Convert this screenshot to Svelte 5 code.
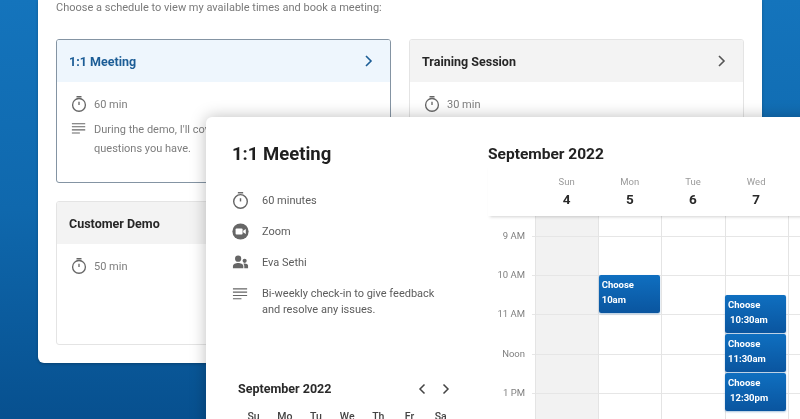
<script lang="ts">
	const schedules = [
		{ name: '1:1 Meeting', mins: 60, active: true, desc: ["During the demo, I'll cover any", 'questions you have.'] },
		{ name: 'Training Session', mins: 30, active: false, desc: [] },
		{ name: 'Customer Demo', mins: 50, active: false, desc: [] }
	];

	const hours = ['9 AM', '10 AM', '11 AM', 'Noon', '1 PM', '2 PM'];

	const days = [
		{ label: 'Sun', num: 4, off: true, slots: [] },
		{ label: 'Mon', num: 5, slots: [{ top: 59, time: '10am', indent: 0 }] },
		{ label: 'Tue', num: 6, slots: [] },
		{
			label: 'Wed',
			num: 7,
			slots: [
				{ top: 79, time: '10:30am', indent: 2 },
				{ top: 118, time: '11:30am', indent: 0 },
				{ top: 157, time: '12:30pm', indent: 2 }
			]
		},
		{ label: 'Thu', num: 8, slots: [] }
	];

	const weekdays = ['Su', 'Mo', 'Tu', 'We', 'Th', 'Fr', 'Sa'];
</script>

{#snippet timer()}
	<svg class="icon" viewBox="0 0 18 18" fill="none" stroke="#666" stroke-width="1.5">
		<path d="M6.2 .8h5.6" />
		<circle cx="9" cy="10" r="7.2" />
		<path d="M9 6.600v3.400" />
	</svg>
{/snippet}

{#snippet notes()}
	<svg class="icon" viewBox="0 0 18 18" fill="none" stroke="#666" stroke-width="1.2">
		<path d="M1 3h15M1 6.500h15M1 10h15M1 13.500h9" />
	</svg>
{/snippet}

<div class="page">
	<section class="panel">
		<p class="intro">Choose a schedule to view my available times and book a meeting:</p>
		<div class="cards">
			{#each schedules as s}
				<div class="card" class:active={s.active}>
					<div class="card-head">
						<span class="card-name">{s.name}</span>
						<svg class="chevron" viewBox="0 0 10 14" fill="none" stroke="currentColor" stroke-width="1.6">
							<path d="M2 2l5 5-5 5" />
						</svg>
					</div>
					<div class="card-body">
						<div class="card-row">
							{@render timer()}
							<span>{s.mins} min</span>
						</div>
						{#if s.desc.length}
							<div class="card-row desc">
								{@render notes()}
								<span>{s.desc[0]}<br />{s.desc[1]}</span>
							</div>
						{/if}
					</div>
				</div>
			{/each}
		</div>
	</section>

	<section class="booking">
		<div class="details">
			<h2>1:1 Meeting</h2>
			<ul class="facts">
				<li>{@render timer()}<span>60 minutes</span></li>
				<li>
					<svg class="icon" viewBox="0 0 18 18">
						<circle cx="9" cy="9" r="8.600" fill="#666" />
						<rect x="3.800" y="5.800" width="7.400" height="6.400" rx="1" fill="#fff" />
						<path d="M11.800 8.300l2.800-2v5.400l-2.800-2z" fill="#fff" />
					</svg>
					<span>Zoom</span>
				</li>
				<li>
					<svg class="icon" viewBox="0 0 18 18" fill="#666">
						<circle cx="6.500" cy="5" r="3.300" />
						<path d="M1 15v-2.200C1 10.400 4 9.400 6.500 9.400s5.500 1 5.500 3.400V15z" />
						<circle cx="13.400" cy="7.200" r="2.200" />
						<path d="M13 15v-2.400c0-1-.4-1.700-1-2.300.5-.2 1.100-.3 1.600-.3 1.500 0 3.400.7 3.400 2.300V15z" />
					</svg>
					<span>Eva Sethi</span>
				</li>
				<li class="top">
					{@render notes()}
					<span>Bi-weekly check-in to give feedback<br />and resolve any issues.</span>
				</li>
			</ul>
			<div class="mini">
				<div class="mini-head">
					<span class="mini-title">September 2022</span>
					<svg class="mini-arrow" viewBox="0 0 10 14" fill="none" stroke="#444" stroke-width="1.5">
						<path d="M7.500 2.500l-4.500 4.500 4.500 4.500" />
					</svg>
					<svg class="mini-arrow" viewBox="0 0 10 14" fill="none" stroke="#444" stroke-width="1.5">
						<path d="M2.500 2.500l4.500 4.500-4.500 4.500" />
					</svg>
				</div>
				<div class="mini-days">
					{#each weekdays as d}
						<span>{d}</span>
					{/each}
				</div>
			</div>
		</div>

		<div class="calendar">
			<h3>September 2022</h3>
			<div class="week-head">
				{#each days.slice(0, 4) as d}
					<div class="day-head">
						<span class="day-label">{d.label}</span>
						<span class="day-num">{d.num}</span>
					</div>
				{/each}
			</div>
			<div class="week-body">
				<div class="times">
					{#each hours as h}
						<div class="time">{h}</div>
					{/each}
				</div>
				{#each days as d}
					<div class="day" class:off={d.off}>
						<div class="cell first"></div>
						{#each hours as _}
							<div class="cell"></div>
						{/each}
						{#each d.slots as slot}
							<div class="slot" style="top: {slot.top}px">
								Choose<br /><span style="margin-left: {slot.indent}px">{slot.time}</span>
							</div>
						{/each}
					</div>
				{/each}
			</div>
		</div>
	</section>
</div>

<style>
	:global(body) {
		margin: 0;
	}

	.page {
		position: relative;
		width: 800px;
		height: 419px;
		overflow: hidden;
		background: linear-gradient(180deg, #1474bc 0%, #0f68ad 50%, #07508f 100%);
		font-family: Roboto, 'Liberation Sans', sans-serif;
		color: #222;
		filter: blur(0.35px);
	}

	.panel {
		box-sizing: border-box;
		width: 724px;
		height: 363px;
		margin-left: 38px;
		padding: 0 18px;
		background: #fff;
		border-radius: 0 0 6px 6px;
		box-shadow: 0 1px 3px rgba(0, 0, 0, 0.25);
	}

	.intro {
		margin: 0;
		height: 39px;
		font-size: 11px;
		line-height: 15px;
		color: #7a7a7a;
	}

	.cards {
		display: grid;
		grid-template-columns: 335px 335px;
		grid-auto-rows: 144px;
		gap: 18px;
	}

	.card {
		box-sizing: border-box;
		border: 1px solid #e4e4e4;
		border-radius: 3px;
		overflow: hidden;
	}

	.card.active {
		border-color: #8494a3;
	}

	.card-head {
		display: flex;
		align-items: center;
		justify-content: space-between;
		height: 42px;
		padding: 0 16px 0 12px;
		background: #f3f3f3;
		color: #555;
	}

	.active .card-head {
		background: #eef6fd;
		color: #1c5d96;
	}

	.card-name {
		font-size: 12.500px;
		font-weight: 700;
		color: #262626;
	}

	.active .card-name {
		color: #1c5d96;
	}

	.chevron {
		width: 10px;
		height: 14px;
	}

	.card-body {
		padding: 13px 14px;
	}

	.card-row {
		display: flex;
		align-items: center;
		gap: 7px;
		height: 18px;
		font-size: 11px;
		color: #7d7d7d;
	}

	.card-row .icon {
		width: 16px;
		height: 16px;
	}

	.card-row.desc {
		align-items: flex-start;
		height: auto;
		margin-top: 7px;
		line-height: 19px;
	}

	.card-row.desc .icon {
		margin-top: 1px;
	}

	.icon {
		flex: none;
		width: 17px;
		height: 17px;
	}

	/* the booking window floats over the schedule list */
	.booking {
		position: absolute;
		left: 206px;
		top: 117px;
		width: 640px;
		height: 340px;
		display: flex;
		background: #fff;
		border-radius: 6px 0 0 0;
		box-shadow: 0 0 16px rgba(0, 0, 0, 0.26);
	}

	.details {
		box-sizing: border-box;
		flex: none;
		width: 282px;
		padding: 25px 26px 0;
	}

	h2 {
		margin: 0;
		font-size: 18.500px;
		line-height: 24px;
		font-weight: 700;
		color: #1f1f1f;
	}

	.facts {
		list-style: none;
		margin: 19px 0 0;
		padding: 0;
		font-size: 11px;
		color: #5c5c5c;
	}

	.facts li {
		display: flex;
		align-items: center;
		gap: 13px;
		height: 31px;
	}

	.facts li.top {
		align-items: flex-start;
		padding-top: 8px;
		line-height: 16px;
	}

	.mini {
		margin: 64px 0 0 6px;
	}

	.mini-head {
		display: flex;
		align-items: center;
		gap: 14px;
		padding-right: 11px;
	}

	.mini-title {
		flex: 1;
		font-size: 12.500px;
		font-weight: 700;
		color: #2a2a2a;
	}

	.mini-arrow {
		width: 10px;
		height: 14px;
	}

	.mini-days {
		display: grid;
		grid-template-columns: repeat(7, 31.200px);
		margin-top: 14px;
		font-size: 10.500px;
		font-weight: 500;
		text-align: center;
		color: #444;
	}

	.calendar {
		flex: 1;
	}

	h3 {
		margin: 0;
		padding-top: 27px;
		font-size: 15.500px;
		line-height: 20px;
		font-weight: 700;
		color: #222;
	}

	.week-head {
		display: flex;
		height: 52px;
		padding-left: 47px;
		box-shadow: 0 3px 3px -2px rgba(0, 0, 0, 0.18);
		position: relative;
		z-index: 1;
	}

	.day-head {
		display: flex;
		flex: none;
		flex-direction: column;
		align-items: center;
		width: 63.200px;
		padding-top: 12px;
	}

	.day-label {
		font-size: 9.500px;
		line-height: 12px;
		color: #9a9a9a;
	}

	.day-num {
		margin-top: 2px;
		font-size: 13.500px;
		line-height: 18px;
		font-weight: 700;
		color: #2a2a2a;
	}

	.week-body {
		display: flex;
	}

	.times {
		flex: none;
		width: 47px;
	}

	.time {
		position: relative;
		height: 39.200px;
		padding-right: 10px;
		font-size: 9.500px;
		line-height: 40px;
		text-align: right;
		color: #808080;
	}

	.time::after {
		content: '';
		position: absolute;
		right: 0;
		top: 20px;
		width: 3px;
		border-top: 1px solid #e6e6e6;
	}

	.day {
		position: relative;
		flex: none;
		box-sizing: border-box;
		width: 63.200px;
		border-left: 1px solid #e4e4e4;
	}

	.day.off {
		background: #f2f2f2;
	}

	.cell {
		box-sizing: border-box;
		height: 39.200px;
		border-bottom: 1px solid #e6e6e6;
	}

	.cell.first {
		height: 21px;
	}

	/* time slots sit on top of the hour lines */
	.slot {
		position: absolute;
		left: -0.500px;
		right: 1.500px;
		box-sizing: border-box;
		height: 38px;
		padding: 1.500px 3px;
		border-radius: 2px;
		background: linear-gradient(180deg, #0f6fc0, #0a559f);
		box-shadow: 0 1px 2px rgba(10, 85, 159, 0.35);
		font-size: 9.500px;
		line-height: 15px;
		font-weight: 700;
		color: #fff;
	}
</style>
